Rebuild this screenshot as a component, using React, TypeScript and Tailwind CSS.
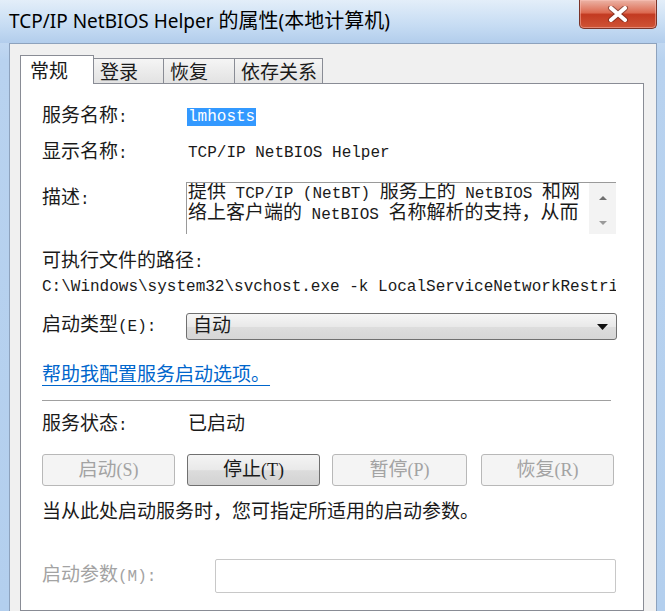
import React from 'react';

const CJK = /([\u2e80-\u9fff\u3000-\u303f\uff00-\uffef]+)/;

// SimSun-style mixing: half-width latin at 16px, CJK runs a bit larger
function Mix({ text, cjk = 'text-[19px]' }: { text: string; cjk?: string }) {
  return (
    <>
      {text.split(CJK).map((part, i) =>
        i % 2 === 1 ? (
          <span key={i} className={cjk}>
            {part}
          </span>
        ) : (
          part
        )
      )}
    </>
  );
}

type BtnProps = { label: string; width: string; enabled?: boolean };

function Btn({ label, width, enabled }: BtnProps) {
  const base = 'h-[32px] rounded-[3px] border flex items-center justify-center text-[18px] leading-[24px]';
  const look = enabled
    ? 'border-[#707070] text-[#1a1a1a] bg-[linear-gradient(to_bottom,#f4f4f4,#e9e9e9_50%,#dcdcdc_52%,#d2d2d2)]'
    : 'border-[#b8b8b8] text-[#a3a3a3] bg-[#f4f4f4]';
  return (
    <div className={`${base} ${look} ${width} font-['Liberation_Serif','Noto_Sans_CJK_SC',serif]`}>
      <Mix text={label} />
    </div>
  );
}

function CloseButton() {
  return (
    <div className="absolute top-0 left-[579px] w-[78px] h-[29px] rounded-b-[5px] border border-t-0 border-[#7a3328] bg-[linear-gradient(to_bottom,#ecb4a6_0%,#dc6a51_45%,#c33a21_52%,#cf5436_100%)] flex items-center justify-center shadow-[inset_0_0_0_1px_rgba(255,200,190,0.45)]">
      <svg width="22" height="16" viewBox="0 0 22 16">
        <path d="M4 2 L18 14 M18 2 L4 14" stroke="#5a241b" strokeWidth="6" strokeLinecap="round" opacity="0.55" />
        <path d="M4 2 L18 14 M18 2 L4 14" stroke="#ffffff" strokeWidth="4" strokeLinecap="round" />
      </svg>
    </div>
  );
}

export default function App() {
  const tabs = [
    { name: '登录', w: 'w-[70px]' },
    { name: '恢复', w: 'w-[71px]' },
    { name: '依存关系', w: 'w-[88px]' },
  ];

  return (
    <div className="w-[665px] h-[611px] overflow-hidden relative flex flex-col bg-[linear-gradient(to_bottom,#dce9f7_0px,#c9ddf3_30px,#b8d2ef_60px,#b3cfee_100%)]">
      {/* title bar */}
      <div className="h-[43px] shrink-0 flex items-center pl-[9px] pb-[1px] text-[19px] text-black font-['Noto_Sans','Noto_Sans_CJK_SC',sans-serif] bg-[linear-gradient(to_bottom,#e3eef9,#c6dcf3_60%,#b2cdec)]">
        <span>
          TCP/IP NetBIOS Helper <span className="text-[20px]">的属性</span>(
          <span className="text-[20px]">本地计算机</span>)
        </span>
      </div>
      <CloseButton />

      {/* dialog body */}
      <div className="flex-1 ml-[9px] mr-[8px] border-l border-t border-r border-[#8da2bd] bg-[#f0f0f0] pl-[10px] pr-[12px] pt-[11px] flex flex-col font-['Liberation_Mono','Noto_Sans_CJK_SC',monospace] text-[16px] text-[#1a1a1a]">
        {/* tabs */}
        <div className="flex items-end h-[28px] shrink-0 leading-[24px]">
          <div className="w-[74px] h-[29px] mb-[-1px] relative z-10 bg-white border border-b-0 border-[#898c95] pl-[9px] flex items-center">
            <span className="text-[19px] font-['Noto_Sans_CJK_SC',sans-serif]">常规</span>
          </div>
          {tabs.map((t) => (
            <div
              key={t.name}
              className={`${t.w} h-[25px] border-t border-r border-[#898c95] bg-linear-to-b from-[#f5f5f5] to-[#e2e2e2] pl-[6px] flex items-center`}
            >
              <span className="text-[19px] font-['Noto_Sans_CJK_SC',sans-serif]">{t.name}</span>
            </div>
          ))}
        </div>

        {/* panel */}
        <div className="flex-1 bg-white border border-[#898c95] pl-[21px] pt-[21px] flex flex-col leading-[24px]">
          <div className="flex h-[24px] items-center">
            <div className="w-[144px]">
              <Mix text="服务名称:" />
            </div>
            <span className="ml-[1px] bg-[#3399ff] text-white h-[18px] leading-[18px] px-[1px]">lmhosts</span>
          </div>

          <div className="flex h-[24px] items-center mt-[12px]">
            <div className="w-[144px]">
              <Mix text="显示名称:" />
            </div>
            <span className="pl-[2px]">TCP/IP NetBIOS Helper</span>
          </div>

          <div className="flex mt-[17px]">
            <div className="w-[144px] pt-[5px]">
              <Mix text="描述:" />
            </div>
            <div className="w-[430px] h-[52px] border-t border-l border-[#9a9a9a] flex">
              <div className="flex-1 pl-[1px] leading-[20px] whitespace-nowrap overflow-hidden">
                <div>
                  <Mix text="提供 TCP/IP (NetBT) 服务上的 NetBIOS 和网" />
                </div>
                <div>
                  <Mix text="络上客户端的 NetBIOS 名称解析的支持，从而" />
                </div>
              </div>
              <div className="w-[27px] bg-[#f3f3f3] flex flex-col items-center pt-[13px] gap-[21px]">
                <svg width="8" height="4" viewBox="0 0 8 4">
                  <polygon points="0,4 8,4 4,0" fill="#707070" />
                </svg>
                <svg width="8" height="4" viewBox="0 0 8 4">
                  <polygon points="0,0 8,0 4,4" fill="#9a9a9a" />
                </svg>
              </div>
            </div>
          </div>

          <div className="h-[24px] mt-[16px]">
            <Mix text="可执行文件的路径:" />
          </div>
          <div className="h-[24px] mt-[1px] w-[574px] overflow-hidden whitespace-nowrap">
            C:\Windows\system32\svchost.exe -k LocalServiceNetworkRestricted
          </div>

          <div className="flex items-center mt-[14px]">
            <div className="w-[144px]">
              <Mix text="启动类型(E):" />
            </div>
            <div className="w-[431px] h-[27px] rounded-[3px] border border-[#707070] bg-[linear-gradient(to_bottom,#f6f6f6,#e9e9e9_50%,#dddddd_52%,#d6d6d6)] pl-[6px] pr-[8px] flex items-center justify-between">
              <span className="text-[19px]">自动</span>
              <svg width="11" height="6" viewBox="0 0 11 6">
                <polygon points="0,0 11,0 5.5,6" fill="#111111" />
              </svg>
            </div>
          </div>

          <div className="h-[24px] mt-[21px] text-[19px] text-[#0066cc] underline decoration-[#0066cc] underline-offset-[4px] font-['Noto_Sans_CJK_SC',sans-serif]">
            <span>帮助我配置服务启动选项。</span>
          </div>

          <div className="h-px w-[569px] bg-[#a0a0a0] mt-[15px]" />

          <div className="flex h-[24px] items-center mt-[12px]">
            <div className="w-[146px]">
              <Mix text="服务状态:" />
            </div>
            <span className="text-[19px]">已启动</span>
          </div>

          <div className="flex mt-[17px]">
            <Btn label="启动(S)" width="w-[133px]" />
            <div className="ml-[12px]">
              <Btn label="停止(T)" width="w-[133px]" enabled />
            </div>
            <div className="ml-[12px]">
              <Btn label="暂停(P)" width="w-[135px]" />
            </div>
            <div className="ml-[14px]">
              <Btn label="恢复(R)" width="w-[133px]" />
            </div>
          </div>

          <div className="h-[24px] mt-[15px]">
            <Mix text="当从此处启动服务时，您可指定所适用的启动参数。" />
          </div>

          <div className="flex items-center mt-[34px]">
            <div className="w-[173px] text-[#a3a3a3]">
              <Mix text="启动参数(M):" />
            </div>
            <div className="w-[401px] h-[34px] border border-[#c8c8c8] rounded-[2px] bg-white" />
          </div>
        </div>
      </div>
    </div>
  );
}
